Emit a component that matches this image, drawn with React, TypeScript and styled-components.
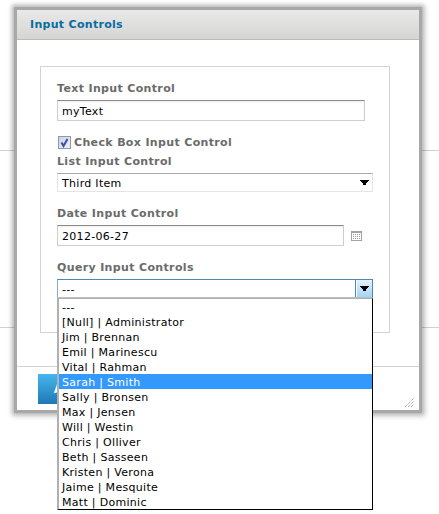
import React from 'react';
import styled, { createGlobalStyle } from 'styled-components';

const GlobalStyle = createGlobalStyle`
	html, body {
		margin: 0;
		padding: 0;
		background: #fff;
	}
	body {
		font-family: "DejaVu Sans", Verdana, sans-serif;
		font-size: 11px;
		color: #000;
	}
`;

const Page = styled.div`
	position: relative;
	width: 439px;
	height: 514px;
	overflow: hidden;
	padding: 10px 0 0 17px;
	box-sizing: border-box;
`;

const BackdropLine = styled.div<{ $top: number }>`
	position: absolute;
	left: 0;
	right: 0;
	top: ${({ $top }) => $top}px;
	height: 1px;
	background: #d2d2d2;
`;

const Dialog = styled.section`
	position: relative;
	width: 402px;
	height: 400px;
	background: #fff;
	box-shadow: 0 0 0 3px #a8a8a8, 0 0 4px 5px rgba(0, 0, 0, 0.22), 1px 1px 6px 6px rgba(0, 0, 0, 0.1);
	display: flex;
	flex-direction: column;
`;

const Header = styled.header`
	height: 30px;
	box-sizing: border-box;
	padding: 0 13px;
	display: flex;
	align-items: center;
	background: linear-gradient(#e9e9e9, #d5d5d3);
	border-bottom: 1px solid #bcbcbc;
`;

const Title = styled.h2`
	margin: 0;
	font-size: 11px;
	font-weight: bold;
	letter-spacing: 0.3px;
	color: #0b6c9f;
`;

const Body = styled.div`
	flex: 1;
	padding: 26px 29px 0 23px;
`;

const Group = styled.div`
	height: 267px;
	box-sizing: border-box;
	border: 1px solid #d4d4d4;
	padding: 15px 16px 0 16px;
`;

const Label = styled.label<{ $mt?: number }>`
	display: block;
	height: 13px;
	line-height: 13px;
	margin-top: ${({ $mt }) => $mt ?? 0}px;
	margin-bottom: 5px;
	font-weight: bold;
	letter-spacing: 0.35px;
	color: #6b6b6b;
`;

const TextBox = styled.div<{ $width: number }>`
	width: ${({ $width }) => $width}px;
	height: 21px;
	box-sizing: border-box;
	border: 1px solid #cfcfcf;
	border-top-color: #8a8a8a;
	padding: 1px 0 0 4px;
	line-height: 19px;
	letter-spacing: 0.3px;
	box-shadow: inset 0 1px 2px #eee;
`;

const CheckRow = styled.div`
	display: flex;
	align-items: center;
	gap: 3px;
	height: 13px;
	margin: 15px 0 6px 1px;
`;

const CheckLabel = styled(Label)`
	margin: 0;
`;

const CheckBox = styled.span`
	display: flex;
	align-items: center;
	justify-content: center;
	width: 13px;
	height: 13px;
	box-sizing: border-box;
	border: 1px solid #8e9aa8;
	background: linear-gradient(135deg, #cdd1e6, #eef0f8);
`;

const Select = styled.div<{ $focused?: boolean }>`
	position: relative;
	width: 316px;
	height: 19px;
	box-sizing: border-box;
	display: flex;
	align-items: center;
	justify-content: space-between;
	padding-left: 4px;
	letter-spacing: 0.3px;
	border: 1px solid #e2e4e6;
	border-top-color: ${({ $focused }) => ($focused ? '#4f88b5' : '#a9a9a9')};
	border-left-color: ${({ $focused }) => ($focused ? '#7fb0d4' : '#e2e4e6')};
	border-right-color: ${({ $focused }) => ($focused ? '#4f88b5' : '#e2e4e6')};
	border-bottom-color: ${({ $focused }) => ($focused ? '#b4c0c4' : '#e2e4e6')};
`;

const SelectValue = styled.span`
	padding-top: 2px;
`;

const ArrowCell = styled.span<{ $focused?: boolean }>`
	width: 17px;
	height: 17px;
	display: flex;
	align-items: center;
	justify-content: center;
	box-sizing: border-box;
	border-left: 1px solid ${({ $focused }) => ($focused ? '#4f88b5' : 'transparent')};
	background: ${({ $focused }) => ($focused ? 'linear-gradient(#e4f2fc, #a5d5f5)' : 'none')};
	box-shadow: ${({ $focused }) => ($focused ? 'inset 1px 0 0 #fff' : 'none')};
`;

const DateRow = styled.div`
	display: flex;
	align-items: center;
	gap: 7px;
`;

const Menu = styled.ul`
	position: absolute;
	left: -1px;
	top: 18px;
	z-index: 2;
	width: 316px;
	height: 212px;
	margin: 0;
	padding: 0;
	box-sizing: border-box;
	list-style: none;
	background: #fff;
	border-left: 2px solid #b0b0b0;
	border-right: 1px solid #000;
	border-bottom: 1px solid #000;
	border-top: 1px solid #b0b0b0;
`;

const MenuItem = styled.li<{ $selected?: boolean }>`
	height: 15px;
	box-sizing: border-box;
	padding: 1px 0 0 3px;
	line-height: 15px;
	letter-spacing: 0.3px;
	white-space: nowrap;
	color: ${({ $selected }) => ($selected ? '#fff' : '#000')};
	background: ${({ $selected }) => ($selected ? '#3399ff' : 'transparent')};
`;

const Footer = styled.footer`
	height: 44px;
	box-sizing: border-box;
	border-top: 1px solid #d4d4d4;
	padding: 7px 0 0 21px;
`;

const ApplyButton = styled.button`
	width: 70px;
	height: 30px;
	padding: 0;
	border: 0;
	font-family: inherit;
	font-size: 12px;
	font-weight: bold;
	color: #fff;
	background: linear-gradient(#45b6ee, #1f78b4);
`;

const Grip = styled.svg`
	position: absolute;
	right: 5px;
	bottom: 3px;
`;

function Arrow() {
	return (
		<svg width="9" height="5" viewBox="0 0 9 5">
			<path d="M0 0h9v1H8v1H7v1H6v2H3V3H2V2H1V1H0z" fill="#000" />
		</svg>
	);
}

function CalendarIcon() {
	return (
		<svg width="11" height="10" viewBox="0 0 11 10">
			<rect width="11" height="10" fill="#a3a3a3" />
			<rect x="1" y="2" width="9" height="7" fill="#fff" />
			<path d="M2 3h1v1H2zM4 3h1v1H4zM6 3h1v1H6zM8 3h1v1H8zM2 5h1v1H2zM4 5h1v1H4zM6 5h1v1H6zM8 5h1v1H8zM2 7h1v1H2zM4 7h1v1H4zM6 7h1v1H6zM8 7h1v1H8z" fill="#9a9a9a" />
		</svg>
	);
}

const queryItems = [
	'---',
	'[Null] | Administrator',
	'Jim | Brennan',
	'Emil | Marinescu',
	'Vital | Rahman',
	'Sarah | Smith',
	'Sally | Bronsen',
	'Max | Jensen',
	'Will | Westin',
	'Chris | Olliver',
	'Beth | Sasseen',
	'Kristen | Verona',
	'Jaime | Mesquite',
	'Matt | Dominic',
];

export default function App() {
	return (
		<>
			<GlobalStyle />
			<Page>
				<BackdropLine $top={150} />
				<BackdropLine $top={327} />
				<Dialog>
					<Header>
						<Title>Input Controls</Title>
					</Header>
					<Body>
						<Group>
							<Label>Text Input Control</Label>
							<TextBox $width={308}>myText</TextBox>
							<CheckRow>
								<CheckBox>
									<svg width="11" height="11" viewBox="0 0 11 11">
										<path d="M2.5 5.5l2 3.5 4-7" fill="none" stroke="#3a4fa6" strokeWidth="2" />
									</svg>
								</CheckBox>
								<CheckLabel>Check Box Input Control</CheckLabel>
							</CheckRow>
							<Label>List Input Control</Label>
							<Select>
								<SelectValue>Third Item</SelectValue>
								<ArrowCell>
									<Arrow />
								</ArrowCell>
							</Select>
							<Label $mt={15}>Date Input Control</Label>
							<DateRow>
								<TextBox $width={287}>2012-06-27</TextBox>
								<CalendarIcon />
							</DateRow>
							<Label $mt={15}>Query Input Controls</Label>
							<Select $focused>
								<SelectValue>---</SelectValue>
								<ArrowCell $focused>
									<Arrow />
								</ArrowCell>
								<Menu>
									{queryItems.map((item) => (
										<MenuItem key={item} $selected={item === 'Sarah | Smith'}>
											{item}
										</MenuItem>
									))}
								</Menu>
							</Select>
						</Group>
					</Body>
					<Footer>
						<ApplyButton>Apply</ApplyButton>
					</Footer>
					<Grip width="9" height="9" viewBox="0 0 9 9">
						<path d="M0 9L9 0M3 9l6-6M6 9l3-3" stroke="#8a8a8a" strokeWidth="1" strokeDasharray="1 1" fill="none" />
					</Grip>
				</Dialog>
			</Page>
		</>
	);
}
